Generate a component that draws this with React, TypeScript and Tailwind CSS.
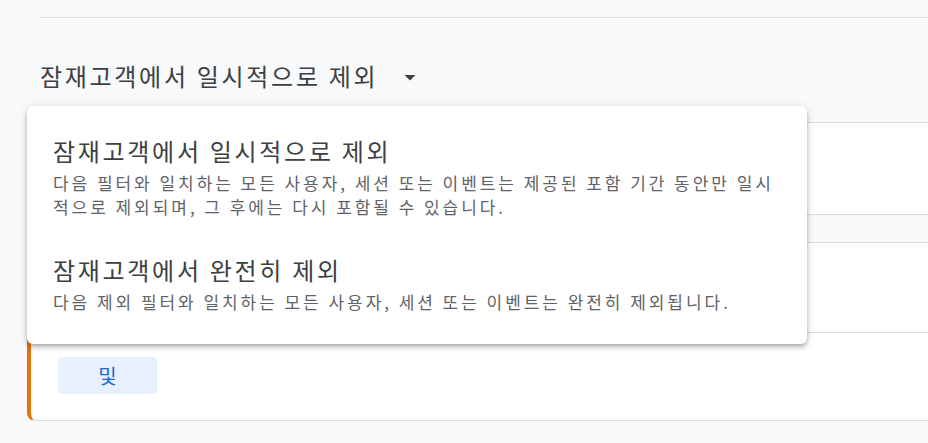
import React from "react";

const font = { fontFamily: '"Noto Sans CJK KR", "Noto Sans", sans-serif' };

function MenuItem({ title, desc }: { title: string; desc: React.ReactNode }) {
  return (
    <div className="flex flex-col">
      <div className="whitespace-nowrap text-[24px] leading-[32px] tracking-[2.7px] text-[#3c4043]">{title}</div>
      <div className="mt-[4px] whitespace-nowrap text-[17px] leading-[24px] tracking-[2.95px] text-[#5f6368]">{desc}</div>
    </div>
  );
}

export default function App() {
  return (
    <div className="relative h-[443px] w-[928px] overflow-hidden bg-[#f8f9fa]" style={font}>
      <div className="pl-[40px] pt-[17px]">
        <div className="h-px bg-[#dadce0]" />
        <div className="mt-[42px] flex items-center">
          <span className="whitespace-nowrap text-[24px] leading-[32px] tracking-[2.7px] text-[#3c4043]">
            잠재고객에서 일시적으로 제외
          </span>
          <svg className="ml-[20px] mt-[2px] h-[24px] w-[24px]" viewBox="0 0 24 24" fill="#3c4043">
            <path d="M6.5 10l5.5 5.5 5.5-5.5z" />
          </svg>
        </div>
      </div>

      <div className="ml-[27px] mr-[-12px] mt-[30px] flex flex-col gap-[27px]">
        <div className="h-[93px] rounded-lg border border-[#dadce0] bg-white" />
        <div className="flex h-[179px] flex-col rounded-lg border border-l-4 border-[#dadce0] border-l-[#e8710a] bg-white">
          <div className="h-[90px] border-b border-[#dadce0]" />
          <div className="pl-[27px] pt-[24px]">
            <div className="flex h-[37px] w-[99px] items-center justify-center rounded bg-[#e8f0fe] text-[20px] leading-none text-[#1967d2]">
              및
            </div>
          </div>
        </div>
      </div>

      <div className="absolute left-[27px] top-[106px] flex h-[238px] w-[780px] flex-col gap-[35px] rounded-md bg-white pl-[26px] pt-[29px] shadow-[0_2px_4px_-1px_rgba(0,0,0,0.2),0_4px_5px_0_rgba(0,0,0,0.14),0_1px_10px_0_rgba(0,0,0,0.12)]">
        <MenuItem
          title="잠재고객에서 일시적으로 제외"
          desc={
            <>
              다음 필터와 일치하는 모든 사용자, 세션 또는 이벤트는 제공된 포함 기간 동안만 일시
              <br />
              적으로 제외되며, 그 후에는 다시 포함될 수 있습니다.
            </>
          }
        />
        <MenuItem
          title="잠재고객에서 완전히 제외"
          desc="다음 제외 필터와 일치하는 모든 사용자, 세션 또는 이벤트는 완전히 제외됩니다."
        />
      </div>
    </div>
  );
}
